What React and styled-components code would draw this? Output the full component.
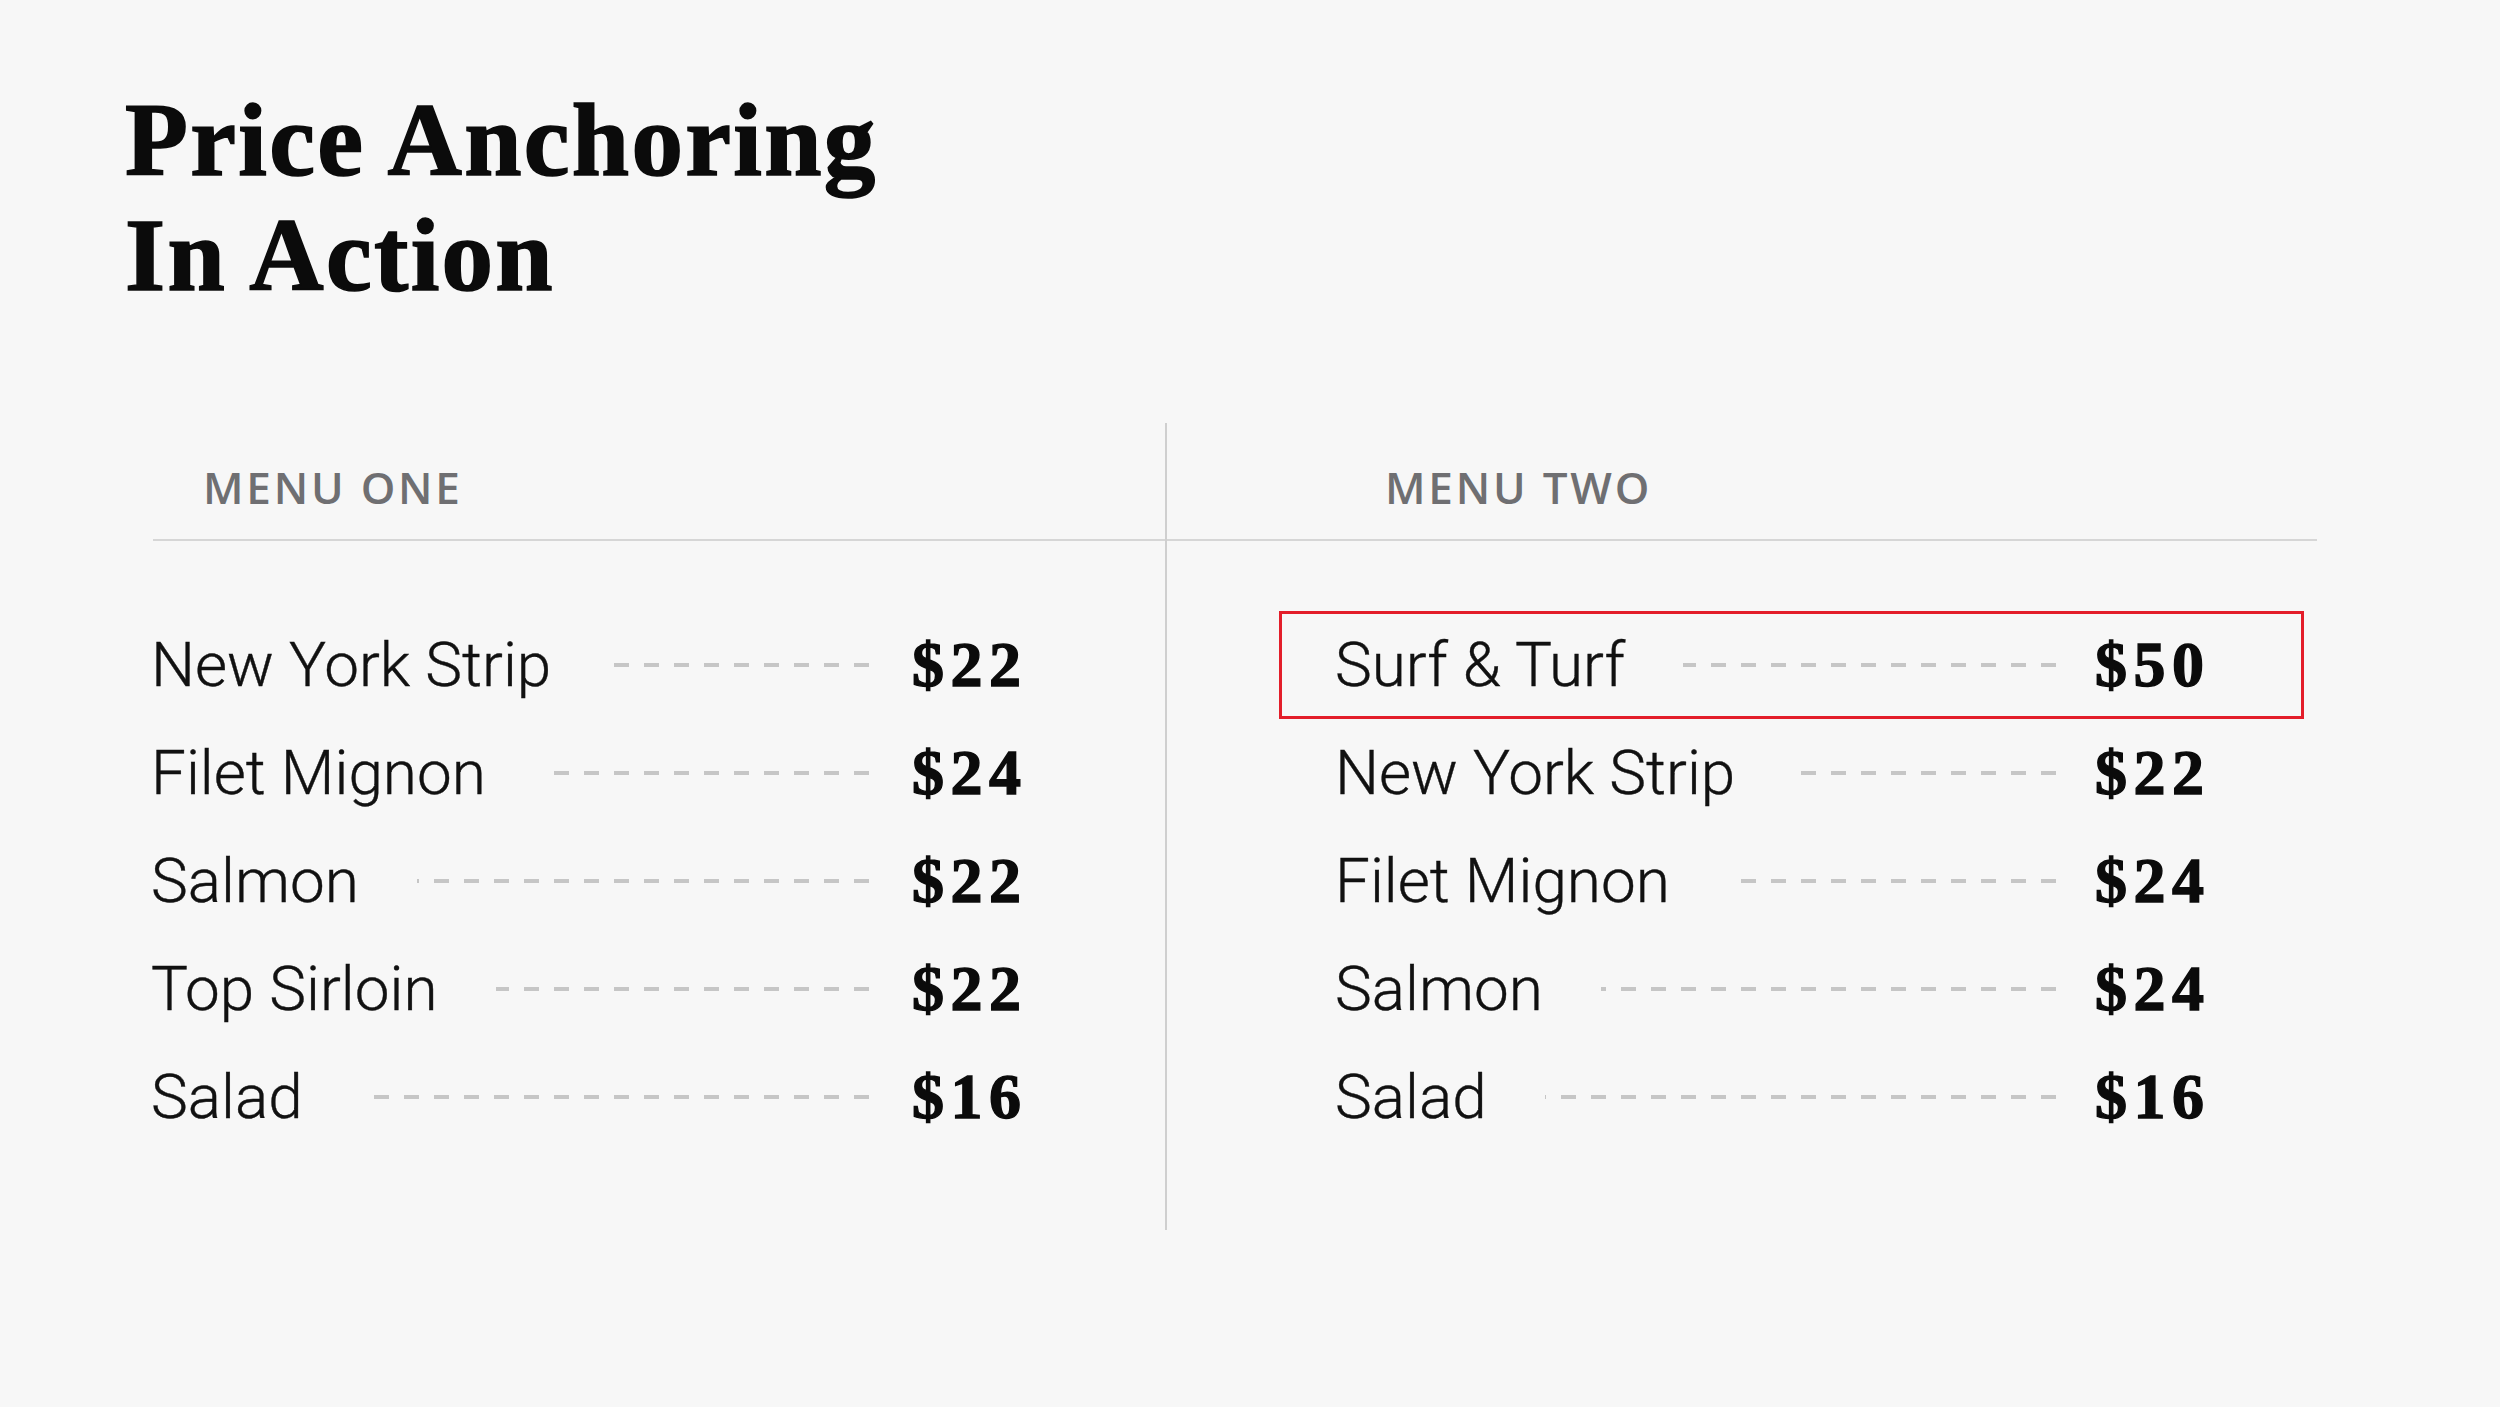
import React from 'react'
import styled, { createGlobalStyle } from 'styled-components'

const MENU_ONE = [
  { name: 'New York Strip', price: '$22' },
  { name: 'Filet Mignon', price: '$24' },
  { name: 'Salmon', price: '$22' },
  { name: 'Top Sirloin', price: '$22' },
  { name: 'Salad', price: '$16' }
]

const MENU_TWO = [
  { name: 'Surf & Turf', price: '$50', anchor: true },
  { name: 'New York Strip', price: '$22' },
  { name: 'Filet Mignon', price: '$24' },
  { name: 'Salmon', price: '$24' },
  { name: 'Salad', price: '$16' }
]

const GlobalStyle = createGlobalStyle`
  html, body {
    margin: 0;
    padding: 0;
    background: #f7f7f7;
  }
  body {
    width: 2500px;
    height: 1407px;
    overflow: hidden;
  }
`

const Page = styled.div`
  padding: 83px 0 0 125px;
  color: #111;
`

const Title = styled.h1`
  margin: 0;
  font-family: "Liberation Serif", "Times New Roman", serif;
  font-weight: 700;
  font-size: 103px;
  line-height: 115px;
  letter-spacing: 2.3px;
  color: #0b0b0b;
  -webkit-text-stroke: 1.6px #0b0b0b;
`

const Menus = styled.div`
  display: grid;
  grid-template-columns: 1012px 1152px;
  margin: 110px 0 0 28px;
`

const Column = styled.section`
  height: 807px;
  border-left: ${props => (props.divided ? '2px solid #cfcfcf' : 'none')};
`

const Header = styled.div`
  box-sizing: border-box;
  height: 118px;
  padding: 42px 0 0 ${props => props.indent}px;
  border-bottom: 2px solid #d6d6d6;
  font-family: "Open Sans", "Liberation Sans", sans-serif;
  font-weight: 600;
  font-size: 44px;
  line-height: 1;
  letter-spacing: 2.8px;
  color: #6f6f72;
`

const List = styled.ul`
  list-style: none;
  margin: 70px 0 0 ${props => props.offset}px;
  padding: 0;
  width: ${props => props.width}px;
`

const Row = styled.li`
  box-sizing: border-box;
  height: 108px;
  display: grid;
  grid-template-columns: auto 1fr ${props => props.priceCol}px;
  align-items: center;
  padding: 0 ${props => props.pad}px;
  border: 3px solid ${props => (props.anchor ? '#e31e2a' : 'transparent')};
`

const Name = styled.span`
  font-family: Roboto, "Liberation Sans", sans-serif;
  font-weight: 300;
  font-size: 62px;
  line-height: 1;
  white-space: nowrap;
  -webkit-text-stroke: 0.4px #111;
`

const Leader = styled.span`
  height: 4px;
  margin: 0 ${props => props.tail}px 0 58px;
  background: repeating-linear-gradient(
    to left,
    transparent 0 3px,
    #c6c6c6 3px 18px,
    transparent 18px 30px
  );
`

const Price = styled.span`
  font-family: "Liberation Serif", "Times New Roman", serif;
  font-weight: 700;
  font-size: 64px;
  line-height: 1;
  letter-spacing: 6.5px;
  color: #0b0b0b;
  -webkit-text-stroke: 1.4px #0b0b0b;
`

const Menu = ({ title, items, divided, indent, offset, width, pad, priceCol, tail }) => (
  <Column divided={divided}>
    <Header indent={indent}>{title}</Header>
    <List offset={offset} width={width}>
      {items.map(item => (
        <Row key={item.name} anchor={item.anchor} pad={pad} priceCol={priceCol}>
          <Name>{item.name}</Name>
          <Leader tail={tail} />
          <Price>{item.price}</Price>
        </Row>
      ))}
    </List>
  </Column>
)

export default function App() {
  return (
    <Page>
      <GlobalStyle />
      <Title>
        Price Anchoring
        <br />
        In Action
      </Title>
      <Menus>
        <Menu
          title="MENU ONE"
          items={MENU_ONE}
          indent={50}
          offset={-5}
          width={874}
          pad={0}
          priceCol={107}
          tail={40}
        />
        <Menu
          title="MENU TWO"
          items={MENU_TWO}
          divided
          indent={218}
          offset={112}
          width={1025}
          pad={53}
          priceCol={153}
          tail={36}
        />
      </Menus>
    </Page>
  )
}
